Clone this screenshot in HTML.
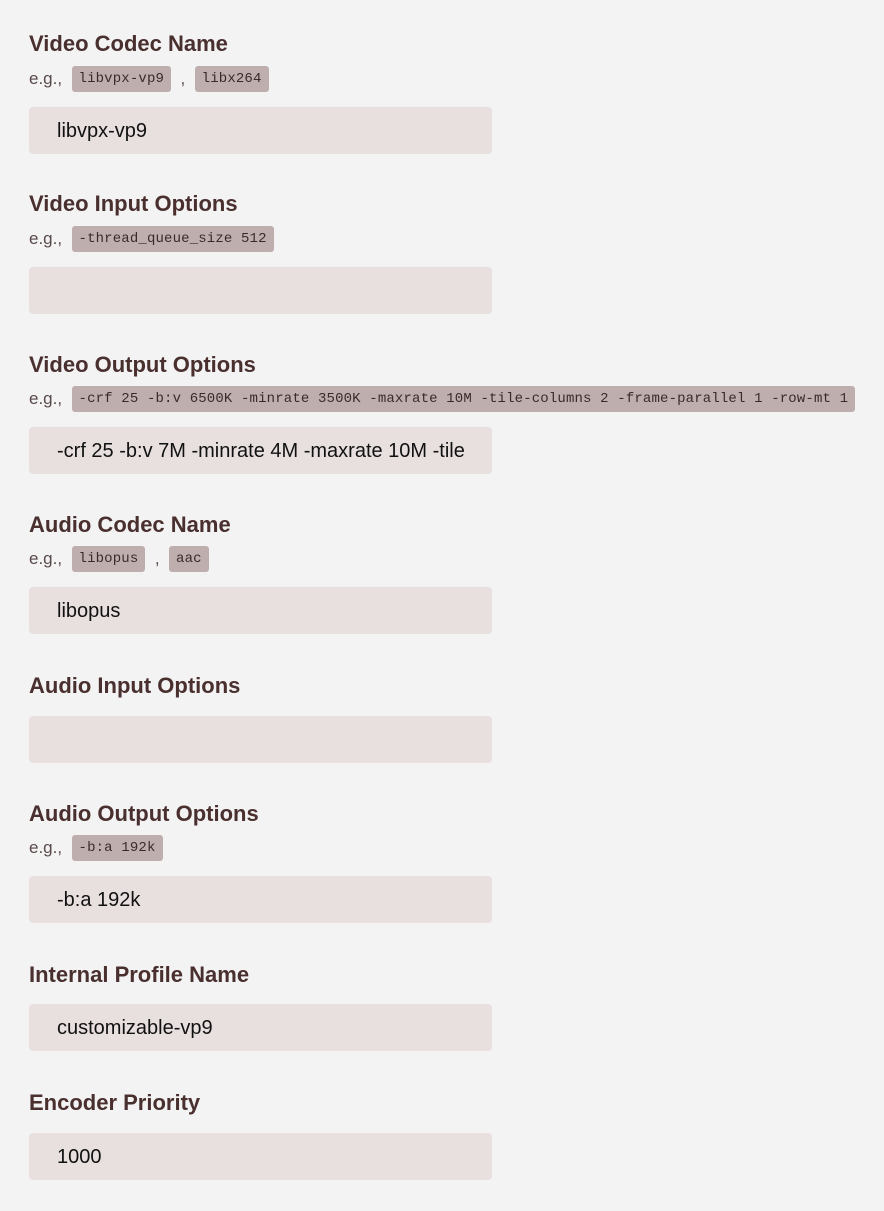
<!DOCTYPE html>
<html><head><style>
body{margin:0;width:884px;height:1211px;background:#f3f3f3;position:relative;overflow:hidden;font-family:"Liberation Sans",sans-serif}
.h{position:absolute;left:29px;font-weight:bold;font-size:22px;color:#4a2f2f;letter-spacing:0px;line-height:28px;white-space:nowrap}
.e{position:absolute;left:29px;height:26px;font-size:17px;color:#5a4a4a;line-height:26px;white-space:nowrap;display:flex;align-items:center}
.c{display:inline-block;background:#bfaeae;border-radius:3px;font-family:"Liberation Mono",monospace;font-size:14px;letter-spacing:0.15px;color:#3a2a2a;padding:0 7px;height:26px;line-height:26px;margin-left:0}
.i{position:absolute;left:29px;width:463px;height:47px;background:#e8dfdf;border-radius:4px;font-size:20px;color:#111;line-height:49px;padding-left:28px;box-sizing:border-box;white-space:nowrap;overflow:hidden;letter-spacing:0px}
</style></head><body>
<div class="h" style="top:30px">Video Codec Name</div>
<div class="e" style="top:66px">e.g.,&nbsp;&nbsp;<span class="c">libvpx-vp9</span>&nbsp;&nbsp;,&nbsp;&nbsp;<span class="c">libx264</span></div>
<div class="i" style="top:107px">libvpx-vp9</div>

<div class="h" style="top:190px">Video Input Options</div>
<div class="e" style="top:226px">e.g.,&nbsp;&nbsp;<span class="c">-thread_queue_size 512</span></div>
<div class="i" style="top:267px"></div>

<div class="h" style="top:351px">Video Output Options</div>
<div class="e" style="top:386px">e.g.,&nbsp;&nbsp;<span class="c">-crf 25 -b:v 6500K -minrate 3500K -maxrate 10M -tile-columns 2 -frame-parallel 1 -row-mt 1</span></div>
<div class="i" style="top:427px">-crf 25 -b:v 7M -minrate 4M -maxrate 10M -tile</div>

<div class="h" style="top:511px">Audio Codec Name</div>
<div class="e" style="top:546px">e.g.,&nbsp;&nbsp;<span class="c">libopus</span>&nbsp;&nbsp;,&nbsp;&nbsp;<span class="c">aac</span></div>
<div class="i" style="top:587px">libopus</div>

<div class="h" style="top:672px">Audio Input Options</div>
<div class="i" style="top:716px"></div>

<div class="h" style="top:800px">Audio Output Options</div>
<div class="e" style="top:835px">e.g.,&nbsp;&nbsp;<span class="c">-b:a 192k</span></div>
<div class="i" style="top:876px">-b:a 192k</div>

<div class="h" style="top:961px">Internal Profile Name</div>
<div class="i" style="top:1004px">customizable-vp9</div>

<div class="h" style="top:1089px">Encoder Priority</div>
<div class="i" style="top:1133px">1000</div>
</body></html>
